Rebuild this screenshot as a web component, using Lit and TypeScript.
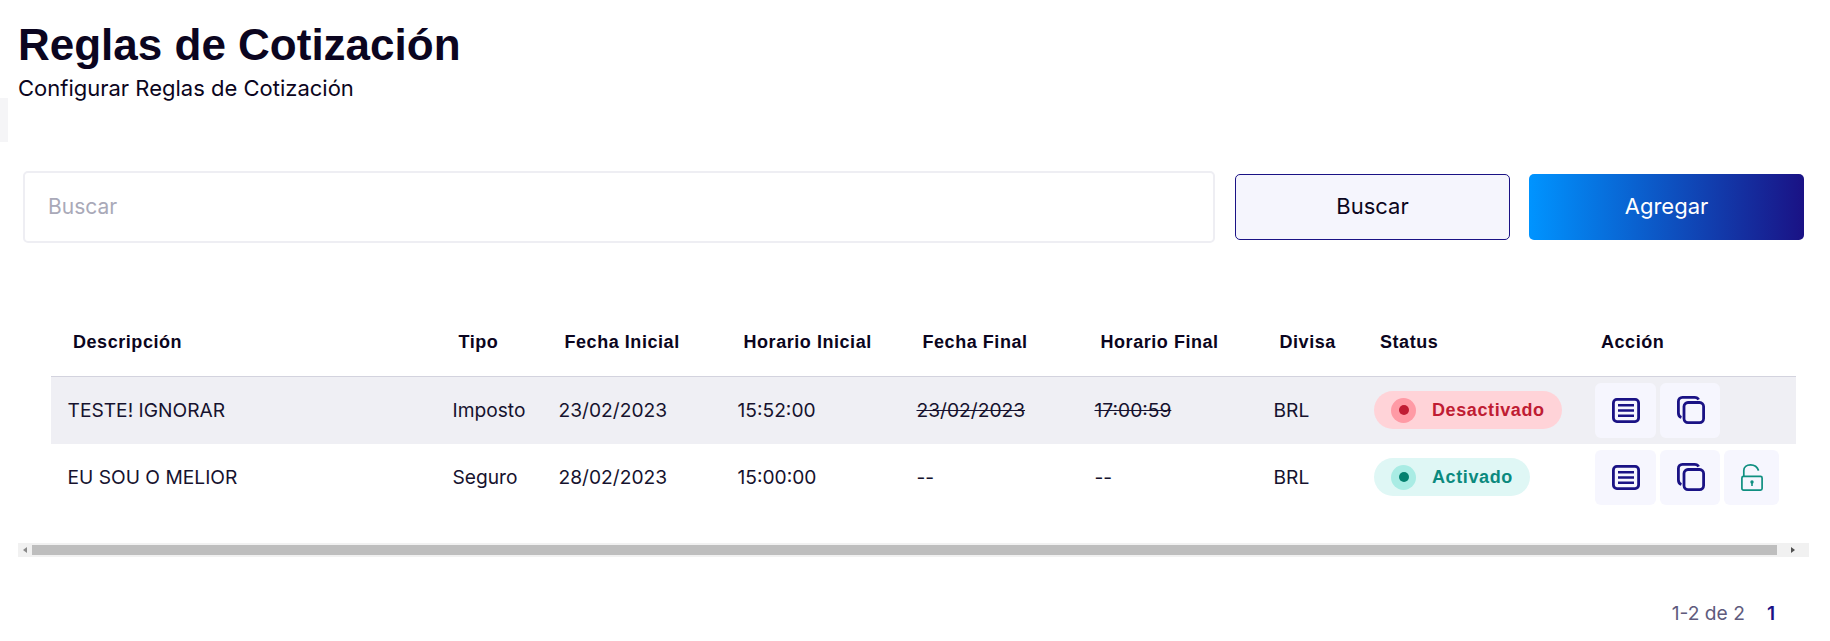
import { LitElement, html, css } from "lit";
import { customElement } from "lit/decorators.js";

const listIcon = html`<svg width="28" height="25" viewBox="0 0 28 25" fill="none" stroke="#1a1285" stroke-width="2.8">
  <rect x="1.4" y="1.4" width="25.2" height="22.2" rx="3.5"/>
  <path d="M6 7.2H22M6 12.5H22M6 17.8H22" stroke-width="2.4"/></svg>`;
const copyIcon = html`<svg class="cp" width="28" height="28" viewBox="0 0 28 28" fill="none" stroke="#1a1285" stroke-width="2.8">
  <rect x="7" y="6.5" width="19.6" height="20.1" rx="4"/>
  <path d="M4.4 21.5C2.5 20.8 1.4 19.4 1.4 17V5.5C1.4 3 3 1.4 5.5 1.4H17.5C19.6 1.4 20.8 2 21.6 3.6"/></svg>`;
const lockIcon = html`<svg width="22" height="27" viewBox="0 0 22 27" fill="none" stroke="#0f8f80" stroke-width="1.7">
  <rect x="0.9" y="12.3" width="20.2" height="13.8" rx="1.6"/>
  <path d="M2.8 12V6.6C2.8 3.2 5.6 0.9 9.5 0.9C13.4 0.9 16.4 3.2 17.6 6.6"/>
  <circle cx="11" cy="18" r="1.7" fill="#0f8f80" stroke="none"/>
  <path d="M11 18V22" stroke-width="1.6"/></svg>`;

interface Row {
  desc: string; tipo: string; fi: string; hi: string; ff: string; hf: string;
  divisa: string; active: boolean; struck: boolean;
}

const rows: Row[] = [
  { desc: "TESTE! IGNORAR", tipo: "Imposto", fi: "23/02/2023", hi: "15:52:00", ff: "23/02/2023", hf: "17:00:59", divisa: "BRL", active: false, struck: true },
  { desc: "EU SOU O MELIOR", tipo: "Seguro", fi: "28/02/2023", hi: "15:00:00", ff: "--", hf: "--", divisa: "BRL", active: true, struck: false },
];

@customElement("app-root")
export class AppRoot extends LitElement {
  static styles = css`
    :host {
      display: block;
      position: relative;
      height: 641px;
      overflow: hidden;
      background: #fff;
      font-family: Inter, "Liberation Sans", sans-serif;
      color: #0b0520;
    }
    .edge {
      position: absolute;
      left: 0;
      top: 98px;
      width: 8px;
      height: 44px;
      background: #f5f5f7;
    }
    header { padding: 19px 0 0 18px; }
    h1 {
      margin: 0;
      font: bold 44px/52px "Liberation Sans", sans-serif;
      color: #0b0520;
    }
    .sub { font-size: 22px; line-height: 26px; margin-top: 4px; }
    .toolbar {
      display: flex;
      align-items: center;
      margin: 70px 0 0 23px;
    }
    .search {
      box-sizing: border-box;
      flex: none;
      width: 1192px;
      height: 72px;
      border: 2px solid #eeeef3;
      border-radius: 5px;
      padding: 0 0 2px 23px;
      display: flex;
      align-items: center;
      font-size: 21px;
      color: #a9a9b8;
    }
    .btn {
      box-sizing: border-box;
      flex: none;
      width: 275px;
      height: 66px;
      padding-bottom: 2px;
      border-radius: 5px;
      display: flex;
      align-items: center;
      justify-content: center;
      font-size: 22px;
    }
    .b1 {
      margin-left: 20px;
      border: 1px solid #1a1285;
      background: #f5f5fd;
      color: #0b0520;
    }
    .b2 {
      margin-left: 19px;
      background: linear-gradient(90deg, #0094ff, #1a1285);
      color: #fff;
    }
    table {
      border-collapse: collapse;
      table-layout: fixed;
      width: 1745px;
      margin: 77px 0 0 51px;
    }
    th {
      font: bold 18px "Liberation Sans", sans-serif;
      letter-spacing: 0.55px;
      text-align: left;
      height: 56px;
      padding: 0 0 10px 22.5px;
      box-sizing: border-box;
      border-bottom: 1px solid #d3d3de;
      color: #0b0520;
      white-space: nowrap;
    }
    th.first { padding-left: 22px; }
    th.st { padding-left: 23px; }
    td {
      height: 67.5px;
      padding: 0 0 1px 16.5px;
      box-sizing: border-box;
      font-size: 19.2px;
      color: #16122e;
      white-space: nowrap;
    }
    td.keep { padding-left: 17px; padding-bottom: 0; }
    tr.shade td { background: #efeff4; }
    .strike { text-decoration: line-through; }
    .pill {
      display: inline-flex;
      align-items: center;
      height: 38px;
      border-radius: 19px;
      padding: 0 17px;
      font: bold 18px "Liberation Sans", sans-serif;
      letter-spacing: 0.6px;
      vertical-align: middle;
    }
    .dot {
      box-sizing: border-box;
      width: 25px;
      height: 25px;
      border-radius: 50%;
      margin-right: 16px;
      display: flex;
      align-items: center;
      justify-content: center;
    }
    .dot i { width: 10px; height: 10px; border-radius: 50%; display: block; }
    .off { background: #ffd3d8; color: #c01c33; }
    .off .dot { background: #ff9aa5; }
    .off .dot i { background: #c01c33; }
    .on { background: #dff7f5; color: #0b8a7e; }
    .on .dot { background: #a9ece4; }
    .on .dot i { background: #04806f; }
    .actions { display: flex; gap: 4px; }
    .ab {
      height: 55px;
      border-radius: 6px;
      background: #f6f6fe;
      display: flex;
      align-items: center;
      justify-content: center;
    }
    .w61 { width: 61px; }
    .w60 { width: 60px; }
    .w55 { width: 55px; }
    .cp { margin-left: 2px; }
    .scroll {
      display: flex;
      align-items: center;
      width: 1791px;
      height: 14px;
      margin: 32px 0 0 18px;
      background: #f1f1f1;
    }
    .arrow { flex: none; width: 14px; display: flex; justify-content: center; }
    .thumb { flex: none; width: 1745px; height: 10px; background: #bebebe; }
    .tail { flex: 1; display: flex; justify-content: center; }
    .pager {
      display: flex;
      justify-content: flex-end;
      align-items: center;
      gap: 22px;
      margin: 44px 55px 0 0;
      font-size: 19.2px;
      color: #5f5b7d;
    }
    .pager b { font-weight: 600; color: #1a1285; }
  `;

  render() {
    return html`
      <div class="edge"></div>
      <header>
        <h1>Reglas de Cotización</h1>
        <div class="sub">Configurar Reglas de Cotización</div>
      </header>
      <div class="toolbar">
        <div class="search">Buscar</div>
        <div class="btn b1">Buscar</div>
        <div class="btn b2">Agregar</div>
      </div>
      <table>
        <colgroup>
          <col style="width:385px" /><col style="width:106px" /><col style="width:179px" />
          <col style="width:179px" /><col style="width:178px" /><col style="width:179px" />
          <col style="width:100px" /><col style="width:221px" /><col style="width:218px" />
        </colgroup>
        <thead>
          <tr>
            <th class="first">Descripción</th><th>Tipo</th><th>Fecha Inicial</th><th>Horario Inicial</th>
            <th>Fecha Final</th><th>Horario Final</th><th>Divisa</th><th class="st">Status</th><th class="st">Acción</th>
          </tr>
        </thead>
        <tbody>
          ${rows.map(
            (r) => html`<tr class=${r.struck ? "shade" : ""}>
              <td>${r.desc}</td>
              <td>${r.tipo}</td>
              <td>${r.fi}</td>
              <td>${r.hi}</td>
              <td class=${r.struck ? "strike" : ""}>${r.ff}</td>
              <td class=${r.struck ? "strike" : ""}>${r.hf}</td>
              <td>${r.divisa}</td>
              <td class="keep">
                <span class="pill ${r.active ? "on" : "off"}">
                  <span class="dot"><i></i></span>${r.active ? "Activado" : "Desactivado"}
                </span>
              </td>
              <td class="keep">
                <div class="actions">
                  <div class="ab w61">${listIcon}</div>
                  <div class="ab w60">${copyIcon}</div>
                  ${r.active ? html`<div class="ab w55">${lockIcon}</div>` : ""}
                </div>
              </td>
            </tr>`
          )}
        </tbody>
      </table>
      <div class="scroll">
        <div class="arrow">
          <svg width="4" height="6" viewBox="0 0 4 6"><path d="M4 0V6L0 3Z" fill="#8a8a8a" /></svg>
        </div>
        <div class="thumb"></div>
        <div class="tail">
          <svg width="4" height="6" viewBox="0 0 4 6"><path d="M0 0V6L4 3Z" fill="#505050" /></svg>
        </div>
      </div>
      <div class="pager"><span>1-2 de 2</span><b>1</b></div>
    `;
  }
}
